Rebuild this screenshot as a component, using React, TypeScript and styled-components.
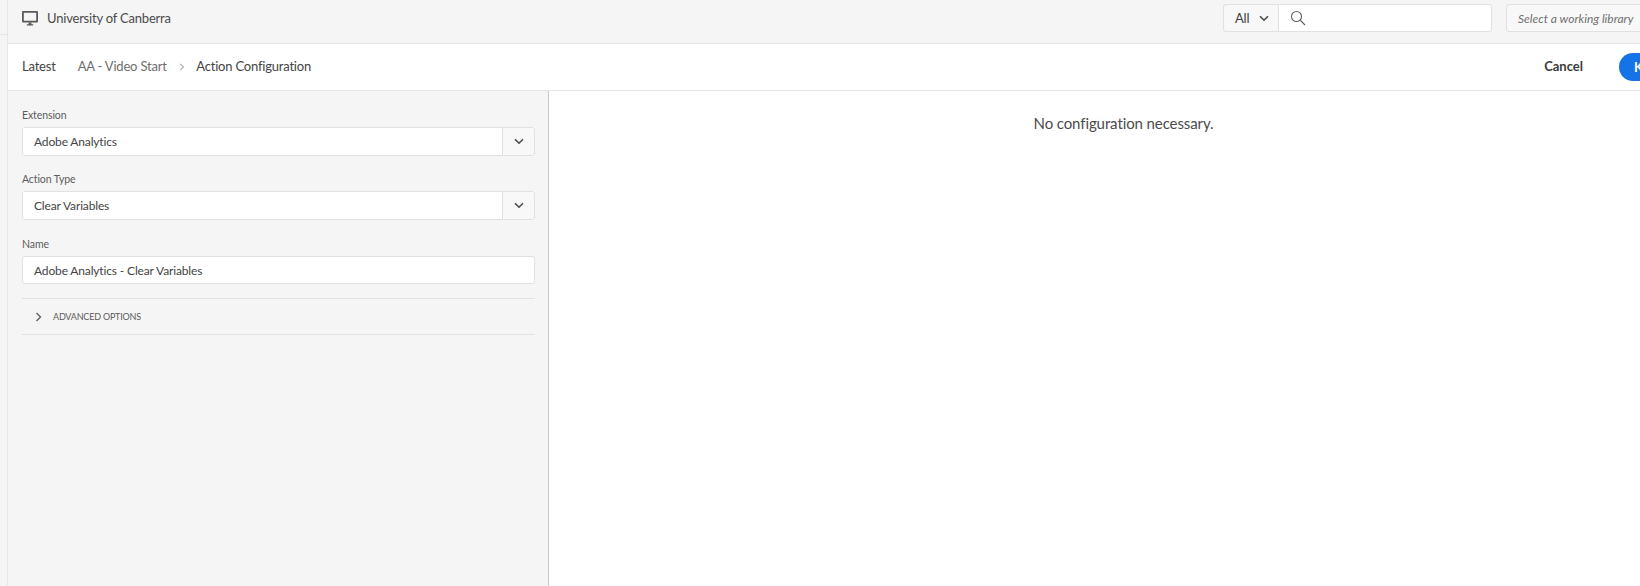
import React from "react";
import styled, { createGlobalStyle } from "styled-components";

const Global = createGlobalStyle`
  html, body { margin: 0; padding: 0; height: 100%; overflow: hidden; background: #fff; }
  #root { height: 100%; }
  * { box-sizing: border-box; }
`;

const FONT = `"Lato", "Open Sans", "Liberation Sans", sans-serif`;

const Page = styled.div`
  display: flex;
  width: 1640px;
  height: 586px;
  font-family: ${FONT};
  color: #3f3f3f;
  overflow: hidden;
`;

const Rail = styled.div`
  width: 8px;
  flex: none;
  background: #f5f5f5;
  border-right: 1px solid #e6e6e6;
`;

const RailTop = styled.div`
  height: 35px;
  border-bottom: 1px solid #e6e6e6;
`;

const Main = styled.div`
  flex: 1;
  min-width: 0;
  display: flex;
  flex-direction: column;
`;

const TopBar = styled.header`
  height: 44px;
  flex: none;
  display: flex;
  align-items: center;
  padding: 0 0 7px 14px;
  background: #f5f5f5;
  border-bottom: 1px solid #e3e3e3;
`;

const OrgName = styled.span`
  font-size: 13px;
  letter-spacing: -0.2px;
  margin: 0 0 1px 9px;
  color: #4b4b4b;
`;

const Spacer = styled.div`
  flex: 1;
`;

const ScopeButton = styled.div`
  width: 55px;
  height: 28px;
  display: flex;
  align-items: center;
  gap: 10px;
  padding-left: 11px;
  font-size: 13px;
  letter-spacing: -0.2px;
  background: #f8f8f8;
  border: 1px solid #e1e1e1;
  border-right: none;
  border-radius: 3px 0 0 3px;
`;

const SearchBox = styled.div`
  width: 214px;
  height: 28px;
  display: flex;
  align-items: center;
  padding-left: 11px;
  background: #fff;
  border: 1px solid #e1e1e1;
  border-radius: 0 3px 3px 0;
`;

const LibraryBox = styled.div`
  width: 134px;
  height: 28px;
  margin-left: 14px;
  padding-left: 11px;
  display: flex;
  align-items: center;
  font-size: 12px;
  font-style: italic;
  white-space: nowrap;
  color: #707070;
  background: #f8f8f8;
  border: 1px solid #e1e1e1;
  border-right: none;
  border-radius: 3px 0 0 3px;
`;

const SubBar = styled.div`
  height: 47px;
  flex: none;
  display: flex;
  align-items: center;
  padding-left: 14px;
  background: #fff;
  border-bottom: 1px solid #e6e6e6;
  font-size: 13px;
  letter-spacing: -0.2px;
`;

const Crumb = styled.span<{ $muted?: boolean }>`
  color: ${(p) => (p.$muted ? "#6e6e6e" : "#444")};
  margin-bottom: 2px;
`;

const Parent = styled(Crumb)`
  margin-left: 22px;
`;

const Separator = styled.span`
  display: flex;
  margin: 0 12px 1px;
`;

const CancelLabel = styled.span`
  font-size: 13px;
  letter-spacing: 0;
  font-weight: 700;
  color: #3a3a3a;
  margin: 0 36px 2px 0;
`;

const PrimaryButton = styled.div`
  width: 21px;
  height: 28px;
  padding-left: 15px;
  display: flex;
  align-items: center;
  font-size: 13px;
  font-weight: 700;
  white-space: nowrap;
  color: #fff;
  background: #1473e6;
  border-radius: 14px 0 0 14px;
  overflow: hidden;
`;

const Content = styled.div`
  flex: 1;
  min-height: 0;
  display: flex;
`;

const Sidebar = styled.aside`
  width: 541px;
  flex: none;
  padding: 17px 13px 0 14px;
  background: #f5f5f5;
  border-right: 1px solid #c8c8c8;
`;

const Field = styled.div<{ $gap: number }>`
  margin-bottom: ${(p) => p.$gap}px;
`;

const Label = styled.div`
  font-size: 10.5px;
  letter-spacing: -0.1px;
  line-height: 14px;
  height: 14px;
  margin-bottom: 5px;
  color: #5c5c5c;
`;

const SelectRow = styled.div`
  display: flex;
  height: 29px;
  border: 1px solid #e1e1e1;
  border-radius: 3px;
  overflow: hidden;
`;

const SelectValue = styled.div`
  flex: 1;
  display: flex;
  align-items: center;
  padding-left: 11px;
  font-size: 12px;
  letter-spacing: -0.15px;
  color: #444;
  background: #fff;
`;

const SelectButton = styled.div`
  width: 32px;
  flex: none;
  display: flex;
  align-items: center;
  justify-content: center;
  background: #f8f8f8;
  border-left: 1px solid #e1e1e1;
`;

const TextInput = styled.div`
  height: 28px;
  display: flex;
  align-items: center;
  padding-left: 11px;
  font-size: 12px;
  letter-spacing: -0.15px;
  color: #444;
  background: #fff;
  border: 1px solid #e1e1e1;
  border-radius: 3px;
`;

const Advanced = styled.div`
  height: 37px;
  display: flex;
  align-items: center;
  padding-left: 13px;
  gap: 11px;
  font-size: 9px;
  letter-spacing: -0.2px;
  color: #5c5c5c;
  border-top: 1px solid #e1e1e1;
  border-bottom: 1px solid #e1e1e1;
`;

const Panel = styled.main`
  flex: 1;
  background: #fff;
  display: flex;
  justify-content: center;
  align-items: flex-start;
  padding: 23px 0 0 58px;
  font-size: 15px;
  letter-spacing: -0.1px;
  color: #4b4b4b;
`;

const Chevron = () => (
  <svg width="10" height="7" viewBox="0 0 10 7" fill="none" stroke="#4b4b4b" strokeWidth="1.6">
    <path d="M1 1.2 5 5.2 9 1.2" />
  </svg>
);

const Caret = ({ color = "#a8a8a8", size = 8 }: { color?: string; size?: number }) => (
  <svg width={size * 0.7} height={size} viewBox="0 0 6 10" fill="none" stroke={color} strokeWidth="1.3">
    <path d="M1 1 5 5 1 9" />
  </svg>
);

const Monitor = () => (
  <svg width="16" height="15" viewBox="0 0 16 15" fill="#5a5a5a">
    <path d="M1 0h14a1 1 0 0 1 1 1v9.5a1 1 0 0 1-1 1H1a1 1 0 0 1-1-1V1a1 1 0 0 1 1-1Zm.8 1.8v7.9h12.4V1.8Z" fillRule="evenodd" />
    <path d="M6.6 11.5h2.8v1.7h1.8V14.6H4.8v-1.4h1.8Z" />
  </svg>
);

const SearchIcon = () => (
  <svg width="16" height="16" viewBox="0 0 16 16" fill="none" stroke="#5c5c5c" strokeWidth="1.1">
    <circle cx="6.5" cy="6.5" r="5" />
    <path d="M10.2 10.2 15 15" />
  </svg>
);

export default function App() {
  return (
    <Page>
      <Global />
      <Rail>
        <RailTop />
      </Rail>
      <Main>
        <TopBar>
          <Monitor />
          <OrgName>University of Canberra</OrgName>
          <Spacer />
          <ScopeButton>
            All <Chevron />
          </ScopeButton>
          <SearchBox>
            <SearchIcon />
          </SearchBox>
          <LibraryBox>Select a working library</LibraryBox>
        </TopBar>
        <SubBar>
          <Crumb>Latest</Crumb>
          <Parent $muted>AA - Video Start</Parent>
          <Separator>
            <Caret />
          </Separator>
          <Crumb>Action Configuration</Crumb>
          <Spacer />
          <CancelLabel>Cancel</CancelLabel>
          <PrimaryButton>Keep</PrimaryButton>
        </SubBar>
        <Content>
          <Sidebar>
            <Field $gap={16}>
              <Label>Extension</Label>
              <SelectRow>
                <SelectValue>Adobe Analytics</SelectValue>
                <SelectButton>
                  <Chevron />
                </SelectButton>
              </SelectRow>
            </Field>
            <Field $gap={17}>
              <Label>Action Type</Label>
              <SelectRow>
                <SelectValue>Clear Variables</SelectValue>
                <SelectButton>
                  <Chevron />
                </SelectButton>
              </SelectRow>
            </Field>
            <Field $gap={14}>
              <Label>Name</Label>
              <TextInput>Adobe Analytics - Clear Variables</TextInput>
            </Field>
            <Advanced>
              <Caret color="#5c5c5c" size={10} />
              ADVANCED OPTIONS
            </Advanced>
          </Sidebar>
          <Panel>No configuration necessary.</Panel>
        </Content>
      </Main>
    </Page>
  );
}
